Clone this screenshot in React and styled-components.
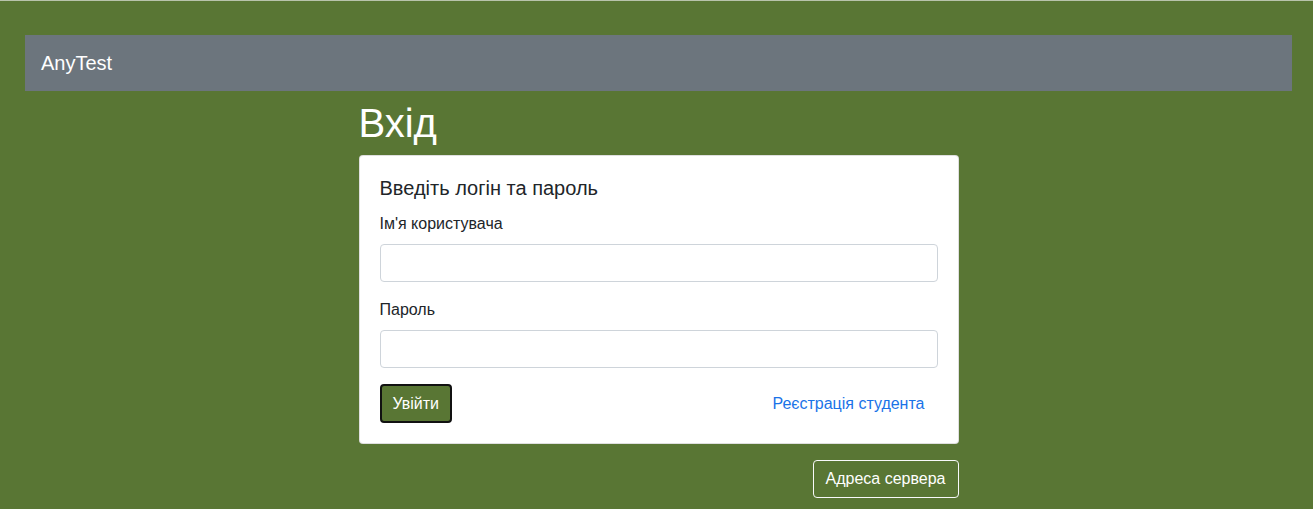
import React from 'react';
import styled, { createGlobalStyle } from 'styled-components';

const GlobalStyle = createGlobalStyle`
body {
  margin: 0;
  background: #597634;
  border-top: 1px solid #b8c3ab;
  font-family: "Liberation Sans", Arial, sans-serif;
  color: #212529;
}
* { box-sizing: border-box; }
`

const Page = styled.div`
padding: 34px 21px 0 25px;
`

const Navbar = styled.nav`
display: flex;
align-items: center;
height: 56px;
padding: 8px 16px;
background: #6c757d;
`

const Brand = styled.a`
font-size: 20px;
line-height: 30px;
padding: 5px 0;
color: #fff;
text-decoration: none;
`

const Main = styled.main`
width: 600px;
margin: 8px auto 0 auto;
display: flex;
flex-direction: column;
`

const Title = styled.h1`
margin: 0 0 8px 0;
font-size: 40px;
font-weight: 500;
line-height: 1.2;
color: #fff;
`

const Card = styled.div`
background: #fff;
border: 1px solid rgba(0,0,0,.125);
border-radius: 4px;
padding: 20px;
`

const CardTitle = styled.h5`
margin: 0 0 12px 0;
font-size: 20px;
font-weight: 400;
line-height: 1.2;
`

const Group = styled.div`
margin-bottom: 16px;
`

const Label = styled.label`
display: block;
font-size: 16px;
line-height: 1.5;
margin-bottom: 8px;
`

const Input = styled.input`
display: block;
width: 100%;
height: 38px;
padding: 6px 12px;
font-size: 16px;
border: 1px solid #ced4da;
border-radius: 4px;
outline: none;
`

const Actions = styled.div`
display: flex;
align-items: center;
justify-content: space-between;
`

const Button = styled.button`
font-family: inherit;
font-size: 16px;
line-height: 1.5;
padding: 6px 12px;
border-radius: 4px;
cursor: pointer;
background: ${p => p.$variant === 'primary' ? '#597634' : 'transparent'};
color: ${p => p.$variant === 'link' ? '#1a73e8' : '#fff'};
border: ${p => p.$variant === 'primary' ? '2px solid #111' : p.$variant === 'outline' ? '1px solid #f8f9fa' : '1px solid transparent'};
${p => p.$variant === 'primary' && 'padding: 6px 11px 5px 11px;'}
`

const Footer = styled.div`
display: flex;
justify-content: flex-end;
margin-top: 16px;
`

const App = () => {
  return <Page>
    <GlobalStyle />
    <Navbar>
      <Brand href="#">AnyTest</Brand>
    </Navbar>
    <Main>
      <Title>Вхід</Title>
      <Card>
        <CardTitle>Введіть логін та пароль</CardTitle>
        <Group>
          <Label>Ім'я користувача</Label>
          <Input type="text" />
        </Group>
        <Group>
          <Label>Пароль</Label>
          <Input type="password" />
        </Group>
        <Actions>
          <Button $variant="primary">Увійти</Button>
          <Button $variant="link">Реєстрація студента</Button>
        </Actions>
      </Card>
      <Footer>
        <Button $variant="outline">Адреса сервера</Button>
      </Footer>
    </Main>
  </Page>
}

export default App;
